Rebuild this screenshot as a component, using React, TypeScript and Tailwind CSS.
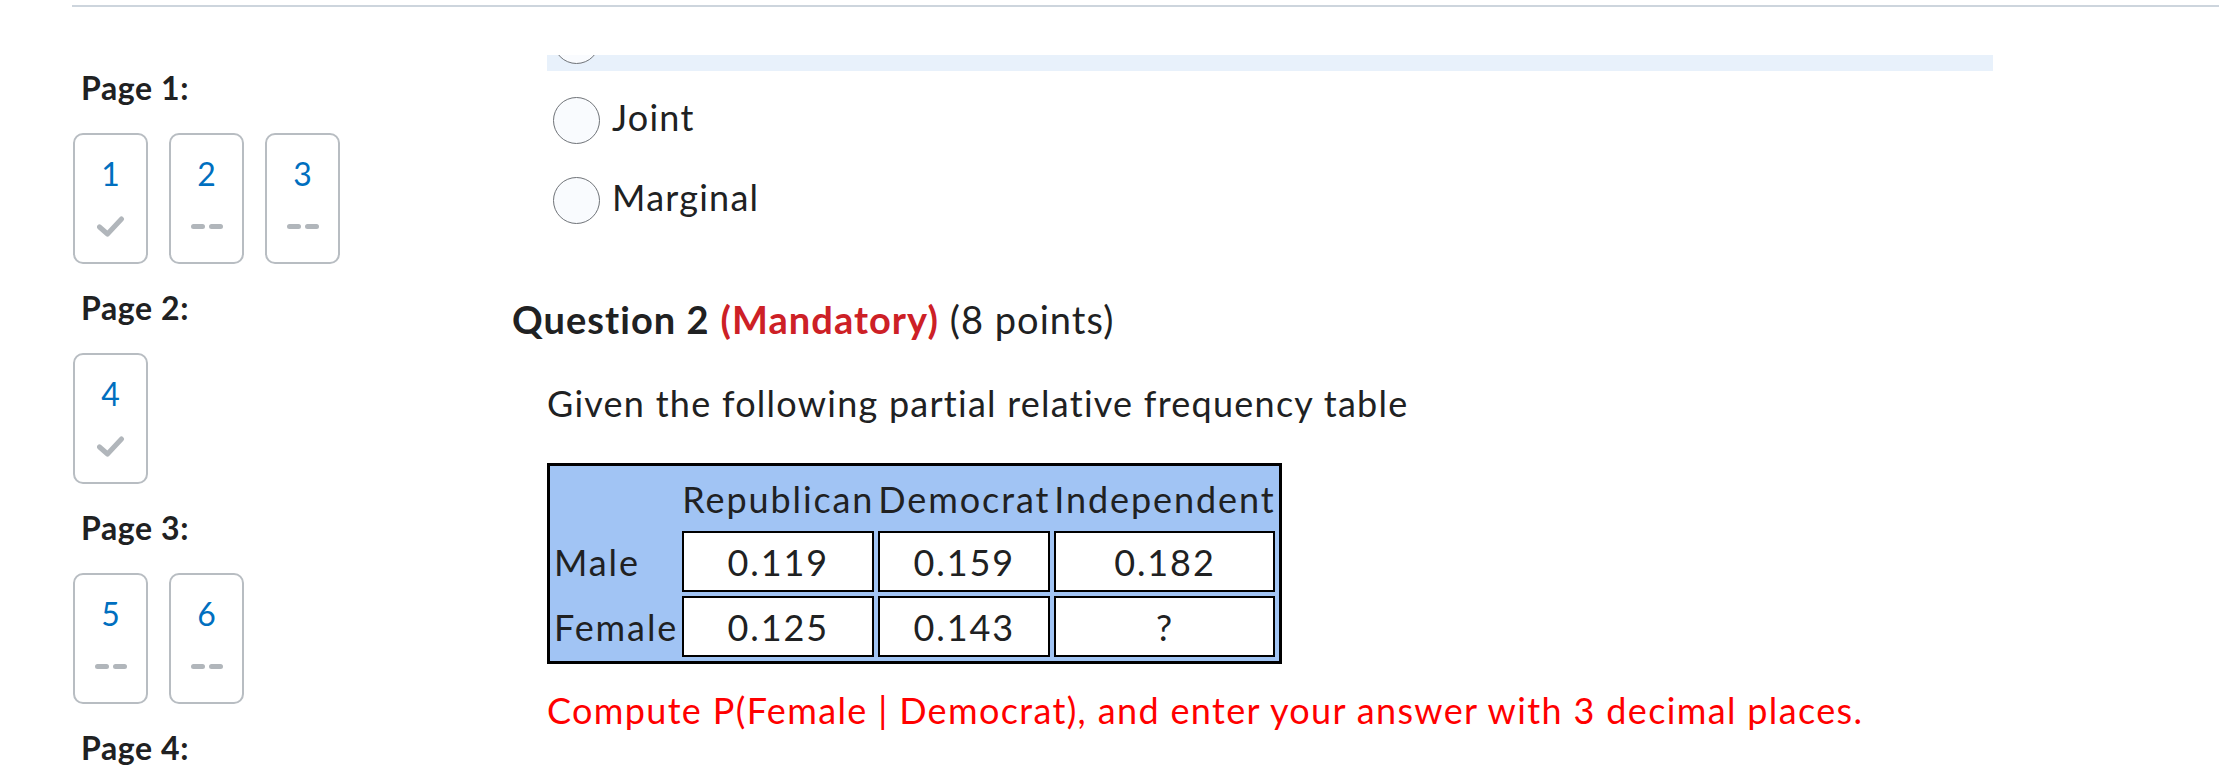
import React from "react";

type Q = { n: number; done: boolean };

const pages: { label: string; qs: Q[] }[] = [
  { label: "Page 1:", qs: [{ n: 1, done: true }, { n: 2, done: false }, { n: 3, done: false }] },
  { label: "Page 2:", qs: [{ n: 4, done: true }] },
  { label: "Page 3:", qs: [{ n: 5, done: false }, { n: 6, done: false }] },
  { label: "Page 4:", qs: [] },
];

function Check() {
  return (
    <svg width="28" height="22" viewBox="0 0 28 22" fill="none">
      <path
        d="M2.5 12 L10.5 19 L24.5 4"
        stroke="#b1b6bb"
        strokeWidth="5"
        strokeLinecap="round"
        strokeLinejoin="round"
      />
    </svg>
  );
}

function Dashes() {
  return (
    <div className="flex gap-[4px]">
      <div className="h-[5px] w-[14px] rounded-full bg-[#b1b6bb]" />
      <div className="h-[5px] w-[14px] rounded-full bg-[#b1b6bb]" />
    </div>
  );
}

function QBox({ q }: { q: Q }) {
  return (
    <div className="flex h-[131px] w-[75px] flex-col items-center rounded-[10px] border-2 border-[#b8bdc2] pt-[19px]">
      <div className="text-[32px] leading-[40px] text-[#006fbf]">{q.n}</div>
      <div className="mt-[21px] flex h-[22px] items-center justify-center">
        {q.done ? <Check /> : <Dashes />}
      </div>
    </div>
  );
}

function Radio({ label, highlighted }: { label: string; highlighted?: boolean }) {
  return (
    <div
      className={
        highlighted
          ? "flex h-[61px] w-[1446px] items-center bg-[#e8f1fb] pl-[6px]"
          : "flex h-[61px] w-[1446px] items-center pl-[6px]"
      }
    >
      <div className="h-[47px] w-[47px] shrink-0 rounded-full border-[1.5px] border-[#6f7378] bg-[#f9fbfe]" />
      {label && (
        <span className="ml-[12px] pb-[7px] text-[36px] leading-[44px] text-[#202122]">{label}</span>
      )}
    </div>
  );
}

export default function App() {
  const cell = "border-2 border-black bg-white text-center";
  return (
    <div className="h-[783px] w-[2219px] overflow-hidden bg-white font-['Lato',_sans-serif] text-[#202122]">
      <div className="ml-[72px] mt-[5px] h-[2px] bg-[#cdd5dd]" />
      <div className="flex">
        <aside className="w-[512px] shrink-0 pl-[73px] pt-[61px]">
          {pages.map((p) => (
            <div key={p.label} className="mb-[24px]">
              <div className="pl-[8px] text-[32px] font-bold leading-[40px] tracking-[0.6px]">{p.label}</div>
              {p.qs.length > 0 && (
                <div className="mt-[25px] flex gap-[21px]">
                  {p.qs.map((q) => (
                    <QBox key={q.n} q={q} />
                  ))}
                </div>
              )}
            </div>
          ))}
        </aside>
        <main className="mt-[48px] h-[728px] flex-1 overflow-hidden tracking-[1.25px]">
          <div className="-mt-[45px] ml-[35px] flex flex-col gap-[19px]">
            <Radio label="" highlighted />
            <Radio label="Joint" />
            <Radio label="Marginal" />
          </div>
          <h3 className="mt-[65px] text-[38px] leading-[46px] tracking-[1.05px]">
            <span className="font-bold">Question 2</span>{" "}
            <span className="font-bold text-[#cd2026]">(Mandatory)</span> (8 points)
          </h3>
          <div className="ml-[35px]">
            <p className="mt-[39px] text-[36px] leading-[44px]">
              Given the following partial relative frequency table
            </p>
            <table className="mt-[38px] border-separate border-spacing-[4px] border-[3px] border-black bg-[#a1c4f4] text-[36px] tracking-[1.9px]">
              <tbody>
                <tr className="h-[57px]">
                  <td className="w-[124px]"></td>
                  <td className="w-[190px] text-left">Republican</td>
                  <td className="w-[172px] text-left">Democrat</td>
                  <td className="w-[221px] text-left">Independent</td>
                </tr>
                <tr className="h-[61px]">
                  <td className="text-left">Male</td>
                  <td className={cell}>0.119</td>
                  <td className={cell}>0.159</td>
                  <td className={cell}>0.182</td>
                </tr>
                <tr className="h-[61px]">
                  <td className="text-left">Female</td>
                  <td className={cell}>0.125</td>
                  <td className={cell}>0.143</td>
                  <td className={cell}>?</td>
                </tr>
              </tbody>
            </table>
            <p className="mt-[24px] text-[36px] leading-[44px] tracking-[1.35px] text-[#ff0000]">
              Compute P(Female | Democrat), and enter your answer with 3 decimal places.
            </p>
          </div>
        </main>
      </div>
    </div>
  );
}
